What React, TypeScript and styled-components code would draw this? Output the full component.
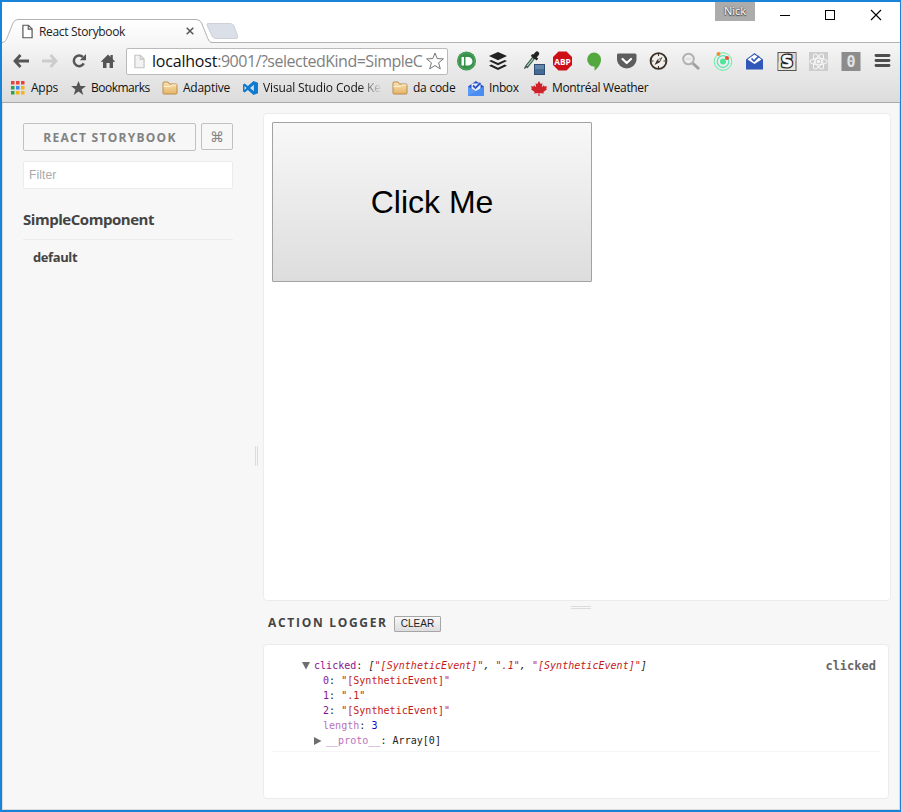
import React from "react";
import styled, { createGlobalStyle, css } from "styled-components";

const uiFont = '"Open Sans", "Noto Sans", sans-serif';

const GlobalStyle = createGlobalStyle`
  *, *::before, *::after { box-sizing: border-box; }
  body { margin: 0; background: #f7f7f7; font-family: ${uiFont}; overflow: hidden; }
  svg { display: block; flex: none; overflow: visible; }
  button { margin: 0; padding: 0; font: inherit; }
`;

const Window = styled.div`
  display: flex;
  flex-direction: column;
  width: 901px;
  height: 812px;
  border: 2px solid #1883d7;
  border-right-width: 1px;
  background: #f7f7f7;
`;

/* ---------- title bar ---------- */

const TitleBar = styled.header`
  display: flex;
  align-items: flex-start;
  flex: none;
  height: 41px;
  background: #fff;
  box-shadow: inset 0 -1px #b3b3b3;
`;

const Tab = styled.div`
  position: relative;
  display: flex;
  align-items: center;
  width: 210px;
  height: 24px;
  margin-top: 17px;
  padding: 0 18px 0 20px;
`;

const TabShape = styled.svg`
  position: absolute;
  left: 0;
  top: 0;
`;

const TabTitle = styled.span`
  position: relative;
  flex: 1;
  margin-left: 6px;
  font-size: 12px;
  letter-spacing: -0.33px;
  color: #222;
  white-space: nowrap;
`;

const TabIcon = styled.svg`
  position: relative;
`;

const NewTab = styled.svg`
  margin: 20px 0 0 -7px;
`;

const UserBadge = styled.div`
  width: 40px;
  height: 19px;
  margin-left: auto;
  background: #acacac;
  color: #fff;
  font-size: 11px;
  line-height: 18px;
  text-align: center;
  text-shadow: 0 0 2px #333, 0 1px 1px #444;
`;

const WindowControls = styled.div`
  display: flex;
  gap: 35px;
  margin: 8px 19px 0 25px;
`;

/* ---------- toolbar ---------- */

const Chrome = styled.div`
  flex: none;
  height: 60px;
  background: linear-gradient(#f6f6f6, #e9e9e9 45%, #dcdcdc);
  border-bottom: 1px solid #a9a9a9;
`;

const NavRow = styled.nav`
  display: flex;
  align-items: center;
  height: 36px;
  padding-left: 4px;
`;

const IconSlot = styled.span<{ $w: number }>`
  display: flex;
  align-items: center;
  justify-content: center;
  flex: none;
  width: ${(p) => p.$w}px;
`;

const AddressBar = styled.div`
  display: flex;
  align-items: center;
  flex: none;
  width: 322px;
  height: 27px;
  margin: 0 2px 0 4px;
  padding: 0 3px 0 7px;
  background: #fff;
  border: 1px solid #bababa;
  border-radius: 2px;
`;

const Url = styled.span`
  flex: 1;
  min-width: 0;
  margin-left: 7px;
  color: #7f7f7f;
  font-size: 16px;
  line-height: 24px;
  letter-spacing: -0.49px;
  white-space: nowrap;

  b { font-weight: 400; color: #111; letter-spacing: -0.2px; }
`;

const BookmarkRow = styled.div`
  display: flex;
  align-items: center;
  height: 18px;
  padding-left: 9px;
`;

const Bookmark = styled.div<{ $w: number; $ls?: number; $fade?: boolean }>`
  display: flex;
  align-items: center;
  flex: none;
  width: ${(p) => p.$w}px;
  font-size: 12px;
  line-height: 16px;
  letter-spacing: ${(p) => p.$ls ?? -0.15}px;
  color: #111;
  white-space: nowrap;

  svg { margin-right: 5px; }
  span { margin-top: -1px; }

  ${(p) =>
    p.$fade &&
    css`
      span {
        background: linear-gradient(90deg, #111 96px, rgba(17, 17, 17, 0) 119px);
        background-clip: text;
        -webkit-background-clip: text;
        color: transparent;
      }
    `}
`;

/* ---------- storybook ---------- */

const Page = styled.div`
  display: flex;
  flex: 1;
  min-height: 0;
  border: solid #d9d9d9;
  border-width: 0 1px 1px;
`;

const Sidebar = styled.aside`
  width: 230px;
  padding: 20px 0 0 20px;
`;

const SidebarHead = styled.div`
  display: flex;
  align-items: flex-start;
  gap: 5px;
`;

const OutlineButton = styled.button<{ $w: number; $h: number }>`
  width: ${(p) => p.$w}px;
  height: ${(p) => p.$h}px;
  border: 1px solid #c1c1c1;
  border-radius: 2px;
  background: transparent;
  color: #828282;
`;

const BrandButton = styled(OutlineButton)`
  font-size: 12px;
  font-weight: 700;
  letter-spacing: 1.27px;
  line-height: 26px;
  padding: 1px 0 0 1px;
  white-space: nowrap;
`;

const ShortcutButton = styled(OutlineButton)`
  font-family: "DejaVu Sans", sans-serif;
  font-size: 14px;
  line-height: 24px;
`;

const Filter = styled.input`
  display: block;
  width: 210px;
  height: 28px;
  margin-top: 10px;
  padding: 0 5px;
  border: 1px solid #ececec;
  border-radius: 2px;
  background: #fff;
  font: 12px "Liberation Sans", Arial, sans-serif;
  letter-spacing: 0.1px;

  &::placeholder { color: #a9a9a9; opacity: 1; }
`;

const Kind = styled.h3`
  width: 210px;
  height: 40px;
  margin: 11px 0 0;
  border-bottom: 1px solid #ececec;
  color: #444;
  font-size: 15px;
  font-weight: 700;
  line-height: 38px;
  letter-spacing: -0.46px;
`;

const Story = styled.div`
  padding-left: 10px;
  color: #444;
  font-size: 13px;
  font-weight: 700;
  line-height: 35px;
  letter-spacing: -0.4px;
`;

const Grip = styled.div<{ $vertical?: boolean }>`
  flex: none;
  border: solid #dcdcdc;
  ${(p) =>
    p.$vertical
      ? css`
          width: 3px;
          height: 20px;
          margin: 343px 5px 0 22px;
          border-width: 0 1px;
        `
      : css`
          width: 20px;
          height: 3px;
          margin: 5px 0 0 308px;
          border-width: 1px 0;
        `}
`;

const Main = styled.main`
  display: flex;
  flex-direction: column;
  flex: 1;
  padding: 10px 0 0;
`;

const Panel = styled.section`
  flex: none;
  border: 1px solid #ececec;
  border-radius: 4px;
  background: #fff;
`;

const Preview = styled(Panel)`
  width: 628px;
  height: 488px;
  padding: 8px;
`;

const ClickButton = styled.button`
  display: block;
  width: 320px;
  height: 160px;
  border: 1px solid #a2a2a2;
  border-radius: 1px;
  background: linear-gradient(#f8f8f8, #dddddd);
  color: #000;
  font: 32px "Liberation Sans", Arial, sans-serif;
`;

const LoggerHead = styled.div`
  display: flex;
  align-items: center;
  height: 30px;
  padding-left: 5px;
`;

const LoggerTitle = styled.h4`
  width: 126px;
  margin: -3px 0 0;
  color: #444;
  font-size: 12px;
  font-weight: 700;
  letter-spacing: 1.7px;
  white-space: nowrap;
`;

const ClearButton = styled.button`
  width: 47px;
  height: 16px;
  border: 1px solid #a6a6a6;
  border-radius: 1px;
  background: linear-gradient(#f8f8f8, #dddddd);
  font: 10px/14px "Liberation Sans", Arial, sans-serif;
  color: #222;
`;

const Logger = styled(Panel)`
  width: 626px;
  height: 155px;
  margin-top: 5px;
  padding: 13px 7px 0 8px;
`;

const LogEntry = styled.div`
  display: flex;
  justify-content: space-between;
  height: 94px;
  padding: 0 5px 0 30px;
  border-bottom: 1px solid #f5f5f5;
  font-family: "DejaVu Sans Mono", monospace;
`;

const LogTree = styled.div`
  font-size: 10px;
  line-height: 15px;
  letter-spacing: 0.03px;
  color: #222;
  white-space: pre;
`;

const LogLine = styled.div<{ $indent: number }>`
  display: flex;
  align-items: center;
  height: 15px;
  padding-left: ${(p) => p.$indent}px;
`;

const LogName = styled.div`
  padding-top: 1px;
  color: #666;
  font-size: 12px;
  font-weight: 700;
  line-height: 15px;
`;

const Arrow = styled.svg`
  margin-right: 4px;
`;

const Key = styled.span<{ $dim?: boolean }>`
  color: ${(p) => (p.$dim ? "#b871bd" : "#881391")};
`;
const Str = styled.span`
  color: #c41a16;
`;
const Num = styled.span`
  color: #1c00cf;
`;

/* ---------- icons ---------- */

const Folder = () => (
  <svg width="16" height="14" viewBox="0 0 16 14">
    <defs>
      <linearGradient id="folder" x2="0" y2="1">
        <stop offset="0" stopColor="#fbe3b4" />
        <stop offset="1" stopColor="#e5b468" />
      </linearGradient>
    </defs>
    <path d="M1 12V2q0-1 1-1h4l1.500 2H14q1 0 1 1v8q0 1-1 1H2q-1 0-1-1z" fill="url(#folder)" stroke="#b98d4d" />
    <path d="M1.500 5.500h7l1.500-1.500H14.500" fill="none" stroke="#fff2d2" />
  </svg>
);

const SheetIcon = ({ stroke, fill }: { stroke: string; fill: string }) => (
  <>
    <path d="M1 .7h6l4 4v9.600H1z" fill={fill} stroke={stroke} strokeWidth="1.300" />
    <path d="M6.800 .700v4.200H11" fill="none" stroke={stroke} strokeWidth="1.200" />
  </>
);

const BackArrow = ({ color, flip }: { color: string; flip?: boolean }) => (
  <svg width="16" height="14" viewBox="0 0 16 14">
    <path
      d="M7.500 1L2 7l5.500 6M2.500 7H16"
      fill="none"
      stroke={color}
      strokeWidth="2.800"
      transform={flip ? "translate(16 0) scale(-1 1)" : undefined}
    />
  </svg>
);

const Reload = () => (
  <svg width="14" height="14" viewBox="0 0 14 14">
    <path d="M11.800 9.400A5.300 5.300 0 1 1 10.800 3" fill="none" stroke="#555" strokeWidth="2.500" />
    <path d="M14 0v6.200H7.800z" fill="#555" />
  </svg>
);

const Home = () => (
  <svg width="14" height="14" viewBox="0 0 14 14">
    <path d="M0 7.500L7 .5l2.500 2.500V1h2.300v4.200L14 7.500l-1 .8-1-.8V14H8.600V9H5.500v5H2V7.500l-1 .8z" fill="#555" />
  </svg>
);

const UrlStar = () => (
  <svg width="18" height="18" viewBox="0 0 18 18">
    <path
      d="M9 1l2.200 5.600 6.200.3-4.800 3.900 1.700 6.100L9 13.500l-5.300 3.400 1.700-6.100L.6 6.900l6.200-.3z"
      fill="#fff"
      stroke="#757575"
      strokeLinejoin="round"
    />
  </svg>
);

const AppsGrid = () => {
  const colors = ["#e8443a", "#e8443a", "#e8443a", "#30a24f", "#3b8beb", "#f4b41b", "#30a24f", "#f4b41b", "#f4b41b"];
  return (
    <svg width="15" height="14" viewBox="0 0 15 14">
      {colors.map((c, i) => (
        <rect key={i} x={(i % 3) * 5} y={Math.floor(i / 3) * 5} width="3.500" height="3.500" fill={c} />
      ))}
    </svg>
  );
};

const BookmarkStar = () => (
  <svg width="15" height="14" viewBox="0 0 15 14">
    <path d="M7.500 0l2 5H15l-4.400 3.400 1.700 5.600-4.800-3.400L2.700 14l1.700-5.600L0 5h5.500z" fill="#555" />
  </svg>
);

const VsCode = () => (
  <svg width="15" height="14" viewBox="0 0 15 14">
    <path
      fillRule="evenodd"
      d="M10.500 0L15 1.700v10.600L10.500 14 4.800 9 1.700 11.500 0 10.500V3.500l1.700-1L4.800 5zM10.800 4L7 7l3.800 3zM1.500 5v4l2-2z"
      fill="#0f7bd0"
    />
  </svg>
);

const InboxColor = () => (
  <svg width="16" height="15" viewBox="0 0 16 15">
    <path d="M0 5.500L8 0l8 5.500V10H0z" fill="#2a56c6" />
    <path d="M3.500 2.500h9V9l-4.500 3-4.500-3z" fill="#e8eefb" />
    <path d="M5 4.500l2.500 2.500L12.500 2" fill="none" stroke="#2a56c6" strokeWidth="1.800" />
    <path d="M0 5.500l8 4.500 8-4.500V15H0z" fill="#5a9af5" />
    <path d="M0 15L16 5.500V15z" fill="#4a8df0" />
  </svg>
);

const Maple = () => (
  <svg width="16" height="15" viewBox="0 0 16 15">
    <path
      d="M8 0l1.700 3 1.700-.8-.5 4 2-2 .6 1.300 2.500-.3-.8 2.300.8.800-3.600 2.700.4 1.400-4.300-.5.100 3.100H7.400l.1-3.100-4.300.5.400-1.400L0 8.300l.8-.8L0 5.200l2.500.3.600-1.300 2 2-.5-4 1.700.8z"
      fill="#cf2129"
    />
  </svg>
);

const Pushbullet = () => (
  <svg width="20" height="20" viewBox="0 0 20 20">
    <circle cx="10.500" cy="10" r="9.500" fill="#38914b" />
    <circle cx="10.500" cy="10" r="8.300" fill="none" stroke="#52a863" />
    <path d="M5.500 6H8v8.500H5.500zM9.500 6h2.700a4.200 4.200 0 0 1 0 8.500H9.500z" fill="#fff" />
  </svg>
);

const Buffer = () => (
  <svg width="18" height="18" viewBox="0 0 18 18">
    <g fill="#222">
      <path d="M9 0l9 4-9 4.200L0 4z" />
      <path d="M0 9l2.300-1.100L9 11l6.700-3.100L18 9l-9 4.200z" />
      <path d="M0 13.700l2.300-1.100L9 15.700l6.700-3.100 2.300 1.100-9 4.300z" />
    </g>
  </svg>
);

const DropperSvg = styled.svg`
  margin: 4px 0 0 9px;
`;

const Dropper = () => (
  <DropperSvg width="21" height="24" viewBox="0 0 21 24">
    <path d="M2.200 16.200L9.500 7" stroke="#2c4a3a" strokeWidth="3.200" />
    <path d="M3 15.200L9.500 7.200" stroke="#a9d8bd" strokeWidth="1.300" />
    <path d="M0 18l.8-2.600 1.800 1.300z" fill="#333" />
    <path d="M7.500 4l6 4.500" stroke="#222" strokeWidth="2.400" />
    <path d="M10.500 5.500L13 2.700" stroke="#222" strokeWidth="4.400" strokeLinecap="round" />
    <rect x="10.500" y="13.500" width="10" height="10" fill="#456a94" stroke="#2f4d70" />
    <path d="M11 14h9v4H11z" fill="#6587ab" />
  </DropperSvg>
);

const AdBlock = () => (
  <svg width="20" height="20" viewBox="0 0 20 20">
    <path d="M6.500.5h8l5.500 5.500v8L14.500 19.500h-8L1 14V6z" fill="#cc1016" />
    <text
      x="2.300"
      y="13.500"
      fontFamily="Open Sans, sans-serif"
      fontWeight="700"
      fontSize="9.500"
      fill="#fff"
      textLength="16.500"
      lengthAdjust="spacingAndGlyphs"
    >
      ABP
    </text>
  </svg>
);

const Balloon = () => (
  <svg width="14" height="19" viewBox="0 0 14 19">
    <path d="M7 .5a7 7 0 0 1 7 7c0 4.800-3.500 9-6.500 11v-3.900A7 7 0 1 1 7 .5z" fill="#53a93f" />
  </svg>
);

const Pocket = () => (
  <svg width="20" height="18" viewBox="0 0 20 18">
    <path d="M2 1.500h17q1.500 0 1.500 1.500v5a9.800 9.500 0 0 1-19.500 0V3q0-1.500 1-1.500z" fill="#5d5d5d" />
    <path d="M6.500 7l4.200 4L15 7" fill="none" stroke="#fff" strokeWidth="2.200" strokeLinecap="round" strokeLinejoin="round" />
  </svg>
);

const Compass = () => (
  <svg width="18" height="18" viewBox="0 0 18 18">
    <circle cx="9.500" cy="9" r="7.900" fill="#f1efec" stroke="#3b2e25" strokeWidth="1.900" />
    <path d="M9.500 2v2M9.500 14v2M2.500 9h2M14.500 9h2" stroke="#3b2e25" />
    <path d="M13.500 5l-2.700 5.300L5.500 13l2.700-5.300z" fill="#3b2e25" />
    <path d="M8.500 8l3.500-2-1.500 3.500z" fill="#cfc7bd" />
  </svg>
);

const Magnifier = () => (
  <svg width="18" height="18" viewBox="0 0 18 18">
    <path d="M11.500 11L18 17" stroke="#a0a0a0" strokeWidth="3" />
    <circle cx="7.500" cy="7" r="5.300" fill="#eee" stroke="#b1b1b1" strokeWidth="2" />
    <path d="M5 7h5" stroke="#d0d0d0" />
  </svg>
);

const Orbit = () => (
  <svg width="19" height="19" viewBox="0 0 19 19">
    <g fill="none">
      <circle cx="10" cy="9.500" r="8.800" stroke="#5ff0a0" />
      <circle cx="10" cy="9.500" r="5.800" stroke="#54e5b3" strokeWidth="1.200" />
    </g>
    <circle cx="10" cy="9.500" r="3" fill="#4de69a" />
    <circle cx="5.500" cy="2" r="2" fill="#f58a32" />
    <circle cx="14" cy="6" r="2" fill="#ee4c31" />
  </svg>
);

const InboxBlue = () => (
  <svg width="17" height="17" viewBox="0 0 17 17">
    <path d="M0 6.500L8.500 0 17 6.500V16.500H0z" fill="#3158b8" />
    <path d="M1.500 6.500L8.500 1.500l7 5-7 4.500z" fill="#fff" />
    <path d="M5.500 5.500L8 8l5-5" fill="none" stroke="#3158b8" strokeWidth="1.700" />
  </svg>
);

const Stylish = () => (
  <svg width="19" height="19" viewBox="0 0 19 19">
    <rect x="1" y=".5" width="18" height="18" fill="#e8e6dc" stroke="#555" />
    <path d="M10 1h8.500v8H10z" fill="#ecd0cf" />
    <path d="M1.500 10H10v8H1.500z" fill="#e4e6dc" />
    <g textAnchor="middle" fontFamily="DejaVu Sans, sans-serif" fontWeight="700" fontSize="16">
      <text x="10" y="15.300" fill="#222" stroke="#222" strokeWidth="3.200" strokeLinejoin="round">S</text>
      <text x="10" y="15.300" fill="#fff" stroke="#fff" strokeWidth=".5" aria-hidden="true">S</text>
    </g>
  </svg>
);

const ReactTile = () => (
  <svg width="19" height="19" viewBox="0 0 19 19">
    <rect width="19" height="19" fill="#cdcdcd" />
    <g fill="none" stroke="#f6f6f6" strokeWidth="1.100">
      <ellipse cx="9.500" cy="9.500" rx="8.500" ry="3.300" />
      <ellipse cx="9.500" cy="9.500" rx="8.500" ry="3.300" transform="rotate(60 9.500 9.500)" />
      <ellipse cx="9.500" cy="9.500" rx="8.500" ry="3.300" transform="rotate(120 9.500 9.500)" />
    </g>
    <circle cx="9.500" cy="9.500" r="1.700" fill="#f6f6f6" />
  </svg>
);

const ZeroTile = () => (
  <svg width="19" height="19" viewBox="0 0 19 19">
    <rect x=".5" width="19" height="19" fill="#8c8c8c" />
    <text x="10" y="15" textAnchor="middle" fontFamily="DejaVu Sans Mono, monospace" fontWeight="700" fontSize="15" fill="#e4e4e4">
      0
    </text>
  </svg>
);

const Menu = () => (
  <svg width="16" height="14" viewBox="0 0 16 14">
    <path d="M2 1.500h13M2 6.500h13M2 11.500h13" stroke="#4d4d4d" strokeWidth="2.900" strokeLinecap="round" />
  </svg>
);

const extensions = [
  Pushbullet, Buffer, Dropper, AdBlock, Balloon, Pocket, Compass,
  Magnifier, Orbit, InboxBlue, Stylish, ReactTile, ZeroTile, Menu,
];

const bookmarks = [
  { label: "Apps", w: 60, Icon: AppsGrid, ls: -0.25 },
  { label: "Bookmarks", w: 91, Icon: BookmarkStar, ls: -0.5 },
  { label: "Adaptive", w: 81, Icon: Folder, ls: -0.25 },
  { label: "Visual Studio Code Ke", w: 149, Icon: VsCode, fade: true },
  { label: "da code", w: 76, Icon: Folder, ls: -0.25 },
  { label: "Inbox", w: 63, Icon: InboxColor, ls: -0.4 },
  { label: "Montréal Weather", w: 120, Icon: Maple, ls: -0.35 },
];

const items = [
  { key: "0", value: '"[SyntheticEvent]"' },
  { key: "1", value: '".1"' },
  { key: "2", value: '"[SyntheticEvent]"' },
];

export default function App() {
  return (
    <>
      <GlobalStyle />
      <Window>
        <TitleBar>
          <Tab>
            <TabShape width="210" height="24" viewBox="0 0 210 24">
              <defs>
                <linearGradient id="tab" x2="0" y2="1">
                  <stop offset="0" stopColor="#fff" />
                  <stop offset="1" stopColor="#f6f6f6" />
                </linearGradient>
              </defs>
              <path
                d="M0 24C4 23 5 19 7 14L11 4Q12.500.5 16 .5H194Q198 .5 199.500 4L204 15C206 20 207 23.500 210 23.500V24z"
                fill="url(#tab)"
              />
              <path
                d="M0 23.500C4 23 5 19 7 14L11 4Q12.500.5 16 .5H194Q198 .5 199.500 4L204 15C206 20 207 23.500 210 23.500"
                fill="none"
                stroke="#b0b0b0"
              />
            </TabShape>
            <TabIcon width="11" height="15" viewBox="0 0 12 15">
              <SheetIcon stroke="#555" fill="#fff" />
            </TabIcon>
            <TabTitle>React Storybook</TabTitle>
            <TabIcon width="8" height="8" viewBox="0 0 8 8">
              <path d="M.7.7l6.600 6.600M7.300.7L.7 7.300" stroke="#555" strokeWidth="1.500" />
            </TabIcon>
          </Tab>
          <NewTab width="34" height="18" viewBox="0 0 34 18">
            <path d="M3 1.500H25Q28 1.500 29 4l3.500 9.500q1 3-1.500 3H11Q8 16.500 7 14L2 3q-.5-1.500 1-1.500z" fill="#dadfe8" stroke="#cdd0d6" />
          </NewTab>
          <UserBadge>Nick</UserBadge>
          <WindowControls>
            <svg width="10" height="10" viewBox="0 0 10 10">
              <path d="M0 5.500h10" stroke="#000" />
            </svg>
            <svg width="10" height="10" viewBox="0 0 10 10">
              <rect x=".5" y=".5" width="9" height="9" fill="none" stroke="#000" />
            </svg>
            <svg width="11" height="10" viewBox="0 0 11 10">
              <path d="M1 0l10 10M11 0L1 10" stroke="#000" strokeWidth="1.100" />
            </svg>
          </WindowControls>
        </TitleBar>

        <Chrome>
          <NavRow>
            <IconSlot $w={29}><BackArrow color="#555" /></IconSlot>
            <IconSlot $w={29}><BackArrow color="#ccc" flip /></IconSlot>
            <IconSlot $w={29}><Reload /></IconSlot>
            <IconSlot $w={29}><Home /></IconSlot>
            <AddressBar>
              <svg width="11" height="15" viewBox="0 0 12 15">
                <SheetIcon stroke="#c4c4c4" fill="#f3f3f3" />
              </svg>
              <Url>
                <b>localhost</b>:9001/?selectedKind=SimpleC
              </Url>
              <UrlStar />
            </AddressBar>
            {extensions.map((Icon, i) => (
              <IconSlot key={i} $w={32}>
                <Icon />
              </IconSlot>
            ))}
          </NavRow>
          <BookmarkRow>
            {bookmarks.map(({ label, w, Icon, fade, ls }) => (
              <Bookmark key={label} $w={w} $fade={fade} $ls={ls}>
                <Icon />
                <span>{label}</span>
              </Bookmark>
            ))}
          </BookmarkRow>
        </Chrome>

        <Page>
          <Sidebar>
            <SidebarHead>
              <BrandButton $w={173} $h={28}>REACT STORYBOOK</BrandButton>
              <ShortcutButton $w={32} $h={27}>⌘</ShortcutButton>
            </SidebarHead>
            <Filter placeholder="Filter" />
            <Kind>SimpleComponent</Kind>
            <Story>default</Story>
          </Sidebar>
          <Grip $vertical />
          <Main>
            <Preview>
              <ClickButton>Click Me</ClickButton>
            </Preview>
            <Grip />
            <LoggerHead>
              <LoggerTitle>ACTION LOGGER</LoggerTitle>
              <ClearButton>CLEAR</ClearButton>
            </LoggerHead>
            <Logger>
              <LogEntry>
                <LogTree>
                  <LogLine $indent={0}>
                    <Arrow width="8" height="8" viewBox="0 0 8 8">
                      <path d="M0 0h8L4 7.500z" fill="#6e6e6e" />
                    </Arrow>
                    <Key>clicked</Key>
                    {": "}
                    <i>
                      [<Str>"[SyntheticEvent]"</Str>, <Str>".1"</Str>, <Str>"[SyntheticEvent]"</Str>]
                    </i>
                  </LogLine>
                  {items.map(({ key, value }) => (
                    <LogLine key={key} $indent={21}>
                      <Key>{key}</Key>
                      {": "}
                      <Str>{value}</Str>
                    </LogLine>
                  ))}
                  <LogLine $indent={21}>
                    <Key $dim>length</Key>
                    {": "}
                    <Num>3</Num>
                  </LogLine>
                  <LogLine $indent={12}>
                    <Arrow width="8" height="8" viewBox="0 0 8 8">
                      <path d="M0 0v8l7.500-4z" fill="#6e6e6e" />
                    </Arrow>
                    <Key $dim>__proto__</Key>
                    {": Array[0]"}
                  </LogLine>
                </LogTree>
                <LogName>clicked</LogName>
              </LogEntry>
            </Logger>
          </Main>
        </Page>
      </Window>
    </>
  );
}
